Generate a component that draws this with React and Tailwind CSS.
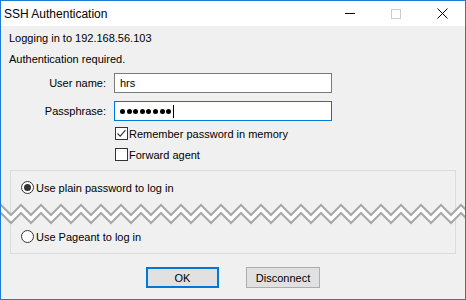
const zig = (offset) => {
  const pts = []
  for (let i = -1; i <= 48; i++) {
    pts.push(`${i * 10},${(i % 2 === 0 ? 3 : 13) + offset}`)
  }
  return pts
}

function Zigzag() {
  const upper = zig(0)
  const lower = zig(8)
  const band = [...upper, ...lower.slice().reverse()].join(" ")
  return (
    <svg className="absolute left-0 top-[201px]" width="466" height="24" viewBox="0 0 466 24">
      <polygon points={band} fill="#ffffff" />
      <polyline points={upper.join(" ")} fill="none" stroke="#a8a8a8" strokeWidth="2" />
      <polyline points={lower.join(" ")} fill="none" stroke="#a8a8a8" strokeWidth="2" />
    </svg>
  )
}

function Checkbox({ checked, label }) {
  return (
    <div className="flex items-center h-[21px]">
      <span className="w-[13px] h-[13px] border border-[#333333] bg-white flex items-center justify-center">
        {checked && (
          <svg width="11" height="11" viewBox="0 0 11 11">
            <path d="M1.5 5.5 L4.2 8.2 L9.5 2.2" fill="none" stroke="#333333" strokeWidth="1.1" />
          </svg>
        )}
      </span>
      <span className="ml-[1px]">{label}</span>
    </div>
  )
}

function Radio({ checked, label }) {
  return (
    <div className="flex items-center h-[21px]">
      <span className="w-[13px] h-[13px] rounded-full border border-[#333333] bg-white flex items-center justify-center">
        {checked && <span className="w-[7px] h-[7px] rounded-full bg-[#333333]" />}
      </span>
      <span className="ml-[2px]">{label}</span>
    </div>
  )
}

export default function App() {
  const dots = [1, 2, 3, 4, 5, 6, 7, 8]

  return (
    <div className="relative w-[466px] h-[300px] overflow-hidden border border-[#1c7cd5] bg-[#f0f0f0] text-black text-[11px] leading-4 font-['Liberation_Sans',Arial,sans-serif] flex flex-col">
      {/* Title bar */}
      <div className="h-[25px] bg-white flex items-center shrink-0">
        <span className="pl-[3px] text-[12px]">SSH Authentication</span>
        <div className="ml-auto flex h-full">
          <div className="w-[46px] h-full flex items-center justify-center">
            <span className="w-[10px] h-[1px] bg-black" />
          </div>
          <div className="w-[46px] h-full flex items-center justify-center">
            <span className="w-[10px] h-[10px] border border-[#cccccc]" />
          </div>
          <div className="w-[46px] h-full flex items-center justify-center">
            <svg width="11" height="11" viewBox="0 0 11 11">
              <path d="M0.5 0.5 L10.5 10.5 M10.5 0.5 L0.5 10.5" stroke="#000" strokeWidth="1" />
            </svg>
          </div>
        </div>
      </div>

      {/* Body */}
      <div className="pl-[8px] pt-[4px]">
        <div>Logging in to 192.168.56.103</div>
        <div className="mt-[5px]">Authentication required.</div>

        <div className="mt-[6px] flex items-center">
          <span className="w-[97px] text-right">User name:</span>
          <div className="ml-[8px] w-[218px] h-[20px] border border-[#7a7a7a] bg-white flex items-center pl-[5px]">
            hrs
          </div>
        </div>

        <div className="mt-[8px] flex items-center">
          <span className="w-[97px] text-right">Passphrase:</span>
          <div className="ml-[8px] w-[218px] h-[20px] border border-[#0078d7] bg-white flex items-center pl-[5px]">
            <div className="flex gap-[1.6px] shrink-0">
              {dots.map((d) => (
                <span key={d} className="w-[5px] h-[5px] shrink-0 rounded-full bg-black" />
              ))}
            </div>
            <span className="ml-[2px] w-[1px] h-[13px] shrink-0 bg-black" />
          </div>
        </div>

        <div className="mt-[2px] pl-[106px]">
          <Checkbox checked label="Remember password in memory" />
          <Checkbox label="Forward agent" />
        </div>
      </div>

      {/* Group box */}
      <div className="mt-[5px] ml-[9px] w-[446px] h-[84px] border border-[#dcdcdc] pl-[10px] pt-[6px]">
        <Radio checked label="Use plain password to log in" />
        <div className="mt-[28px]">
          <Radio label="Use Pageant to log in" />
        </div>
      </div>

      {/* Buttons */}
      <div className="mt-[13px] flex justify-center gap-[27px]">
        <button className="w-[73px] h-[21px] bg-[#e1e1e1] border-2 border-[#0078d7] text-[11px]">OK</button>
        <button className="w-[74px] h-[21px] bg-[#e1e1e1] border border-[#adadad] text-[11px]">Disconnect</button>
      </div>

      <Zigzag />
    </div>
  )
}
